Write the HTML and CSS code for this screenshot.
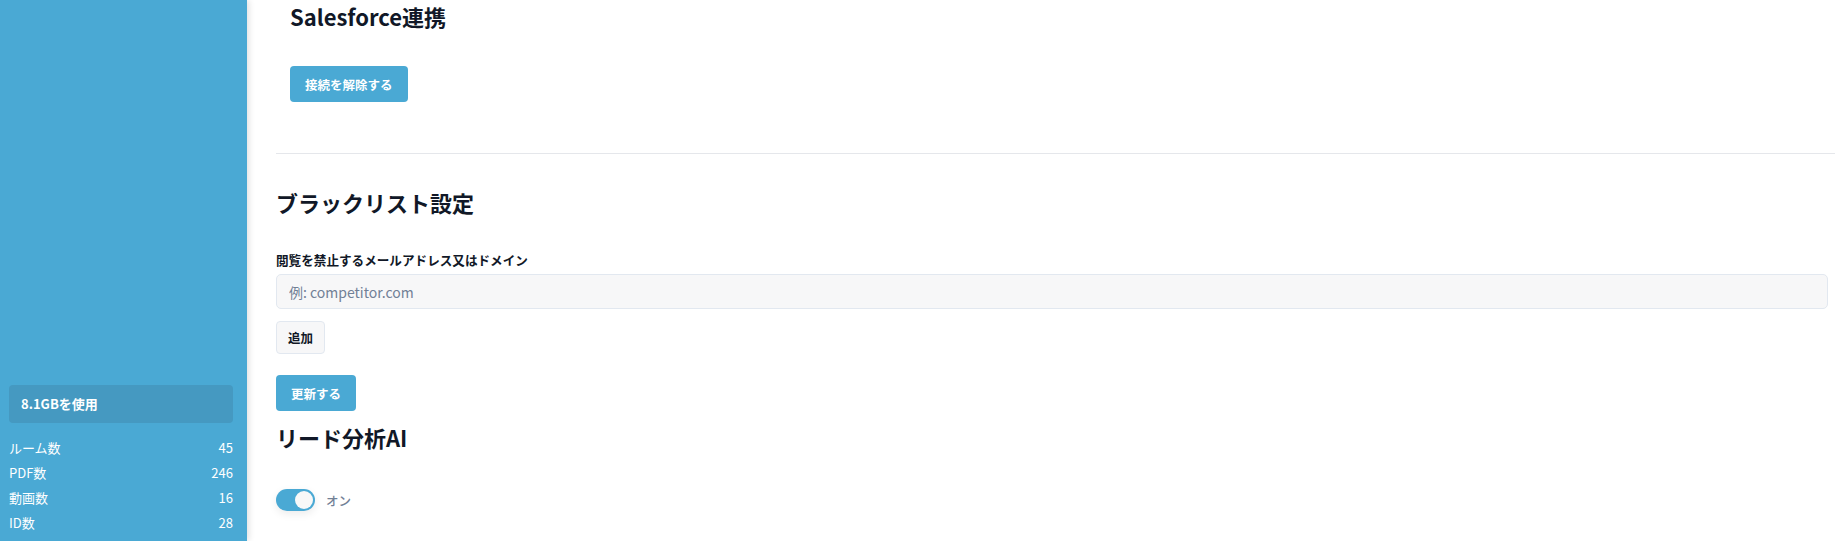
FILE: index.html
```html
<!DOCTYPE html>
<html lang="ja">
<head>
    <meta charset="UTF-8">
    <meta name="viewport" content="width=device-width, initial-scale=1.0">
    <title>設定</title>
    <link rel="stylesheet" href="styles.css">
</head>
<body>
    <div class="layout">
        <aside class="sidebar">
            <div class="usage-box">8.1GBを使用</div>
            <ul class="stats">
                <li><span>ルーム数</span><span>45</span></li>
                <li><span>PDF数</span><span>246</span></li>
                <li><span>動画数</span><span>16</span></li>
                <li><span>ID数</span><span>28</span></li>
            </ul>
        </aside>

        <main class="main">
            <section class="salesforce">
                <h2 class="section-title">Salesforce連携</h2>
                <button class="btn btn-primary btn-disconnect">接続を解除する</button>
            </section>

            <hr class="divider">

            <section class="blacklist">
                <h2 class="section-title">ブラックリスト設定</h2>
                <label class="field-label" for="blacklist-input">閲覧を禁止するメールアドレス又はドメイン</label>
                <input type="text" id="blacklist-input" class="text-input" placeholder="例: competitor.com">
                <button class="btn btn-light">追加</button>
                <button class="btn btn-primary btn-update">更新する</button>
            </section>

            <section class="lead-ai">
                <h2 class="section-title">リード分析AI</h2>
                <label class="toggle-row">
                    <span class="toggle"><span class="toggle-knob"></span></span>
                    <span class="toggle-label">オン</span>
                </label>
            </section>
        </main>
    </div>
</body>
</html>
```

FILE: styles.css
```css
body {
    margin: 0;
    font-family: "Noto Sans CJK JP", "Noto Sans", sans-serif;
    color: #111827;
    background-color: white;
}

.layout {
    display: flex;
    height: 541px;
    overflow: hidden;
}

.sidebar {
    width: 247px;
    flex-shrink: 0;
    box-sizing: border-box;
    background-color: #4aa9d4;
    box-shadow: 2px 0 6px rgba(0, 0, 0, 0.12);
    display: flex;
    flex-direction: column;
    justify-content: flex-end;
    padding: 0 14px 6px 9px;
    color: white;
    position: relative;
    z-index: 1;
}

.usage-box {
    background-color: #4599c1;
    border-radius: 4px;
    height: 38px;
    line-height: 38px;
    padding-left: 12px;
    font-size: 13px;
    font-weight: bold;
    margin-bottom: 12px;
}

.stats {
    list-style: none;
    margin: 0;
    padding: 0;
}

.stats li {
    display: flex;
    justify-content: space-between;
    height: 25px;
    line-height: 25px;
    font-size: 13px;
}

.main {
    flex: 1;
    padding-left: 29px;
    min-width: 0;
}

.section-title {
    margin: 0;
    font-size: 22px;
    font-weight: bold;
    line-height: 26px;
    color: #111827;
}

.salesforce {
    padding: 3px 0 0 14px;
}

.salesforce .section-title {
    margin-bottom: 37px;
}

.btn {
    display: block;
    font-family: inherit;
    font-size: 12.5px;
    font-weight: bold;
    border-radius: 4px;
    cursor: pointer;
}

.btn-primary {
    background-color: #4aa9d4;
    color: white;
    border: none;
    height: 36px;
    padding: 0 15px;
}

.btn-light {
    background-color: #f7f7f8;
    color: #111827;
    border: 1px solid #e2e8f0;
    height: 33px;
    padding: 0 11px;
    font-weight: 600;
}

.divider {
    border: none;
    border-top: 1px solid #e5e7eb;
    margin: 51px 0 0 0;
}

.blacklist {
    padding: 35px 7px 0 0;
}

.blacklist .section-title {
    margin-bottom: 36px;
}

.field-label {
    display: block;
    font-size: 12.6px;
    font-weight: 600;
    line-height: 18px;
    margin-bottom: 5px;
}

.text-input {
    display: block;
    box-sizing: border-box;
    width: 100%;
    height: 35px;
    padding: 0 12px;
    background-color: #f7f7f8;
    border: 1px solid #e2e8f0;
    border-radius: 5px;
    font-family: inherit;
    font-size: 14px;
    color: #111827;
    margin-bottom: 12px;
}

.text-input::placeholder {
    color: #718096;
}

.btn-update {
    margin-top: 21px;
}

.lead-ai {
    padding-top: 13px;
}

.lead-ai .section-title {
    margin-bottom: 39px;
}

.toggle-row {
    display: flex;
    align-items: center;
    gap: 11px;
}

.toggle {
    width: 39px;
    height: 22px;
    border-radius: 11px;
    background-color: #4aa9d4;
    box-shadow: 0 3px 8px rgba(0, 0, 0, 0.08);
    display: flex;
    align-items: center;
    justify-content: flex-end;
    padding-right: 2px;
    box-sizing: border-box;
}

.toggle-knob {
    width: 18px;
    height: 18px;
    border-radius: 50%;
    background-color: #f8f8f8;
}

.toggle-label {
    font-size: 12.5px;
    color: #718096;
    font-weight: 500;
}
```
